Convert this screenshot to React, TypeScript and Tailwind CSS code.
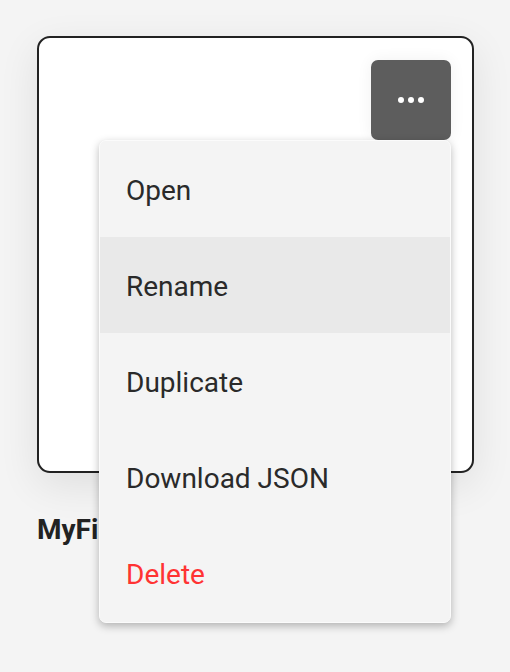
import { useState } from "react";

const items = ["Open", "Rename", "Duplicate", "Download JSON", "Delete"];

export default function App() {
  const [hovered, setHovered] = useState("Rename");

  return (
    <div className="min-h-[672px] w-[510px] bg-[#f4f4f4] pl-[37px] pt-[36px] font-['Roboto',sans-serif] text-[#262626]">
      {/* File card */}
      <div className="h-[437px] w-[437px] rounded-[13px] border-2 border-[#222] bg-white shadow-[0_12px_40px_rgba(0,0,0,0.09)]">
        <div className="flex justify-end pr-[21px] pt-[22px]">
          <div className="relative">
            <button className="flex h-[80px] w-[80px] items-center justify-center gap-[4px] rounded-[7px] bg-[#5d5d5d] shadow-[0_0_16px_rgba(0,0,0,0.06)]">
              <span className="h-[6px] w-[6px] rounded-full bg-white" />
              <span className="h-[6px] w-[6px] rounded-full bg-white" />
              <span className="h-[6px] w-[6px] rounded-full bg-white" />
            </button>

            {/* Context menu */}
            <div className="absolute right-0 top-full z-10 w-[352px] overflow-hidden rounded-[7px] border border-[#fbfbfb] bg-[#f4f4f4] pb-[1px] shadow-[0_3px_8px_rgba(0,0,0,0.28)]">
              {items.map((item) => (
                <div
                  key={item}
                  onMouseEnter={() => setHovered(item)}
                  className={`flex h-[96px] items-center pl-[26px] pt-[4px] text-[28px] ${
                    hovered === item ? "bg-[#e9e9e9]" : ""
                  } ${item === "Delete" ? "text-[#ff3333]" : "text-[#2a2a2a]"}`}
                >
                  {item}
                </div>
              ))}
            </div>
          </div>
        </div>
      </div>

      {/* File name */}
      <p className="mt-[41px] text-[28px] font-bold leading-8 text-[#222]">MyFile</p>
    </div>
  );
}
